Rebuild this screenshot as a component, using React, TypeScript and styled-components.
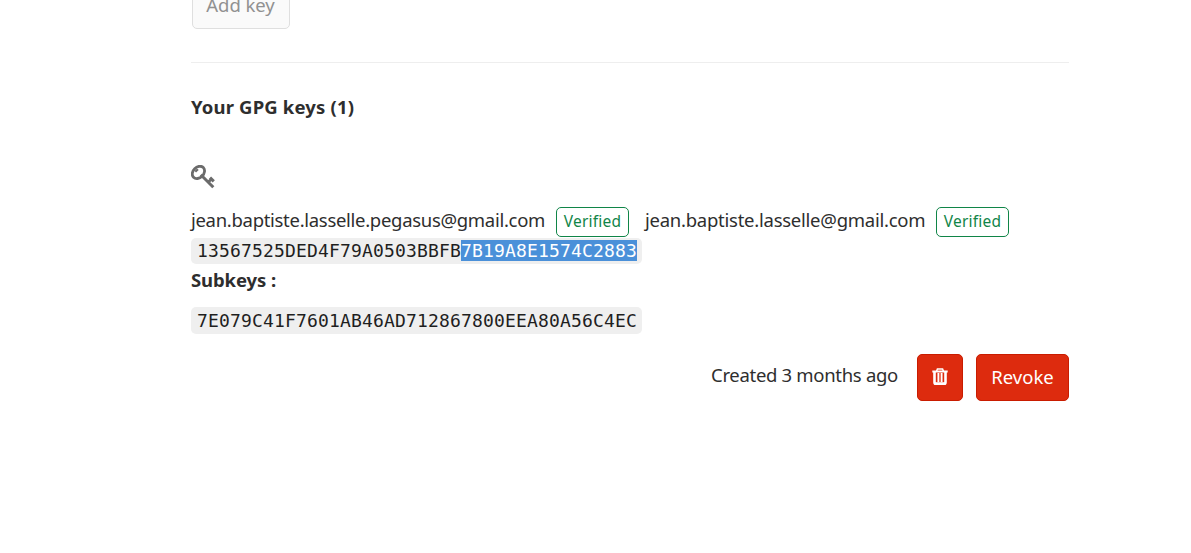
import React from "react";
import styled, { createGlobalStyle } from "styled-components";

const GlobalStyle = createGlobalStyle`
  * { box-sizing: border-box; }
  body {
    margin: 0;
    background: #fff;
    color: #2e2e2e;
    font-family: "Noto Sans", "Open Sans", sans-serif;
    font-size: 18.5px;
    line-height: 26px;
    overflow: hidden;
  }
`;

const Page = styled.main`
  width: 878px;
  height: 553px;
  margin-left: 191px;
  display: flex;
  flex-direction: column;
  align-items: flex-start;
`;

const Text = styled.span<{ $spacing?: number }>`
  white-space: nowrap;
  letter-spacing: ${(p) => p.$spacing ?? 0}px;
`;

const AddButton = styled.button`
  width: 98px;
  height: 47px;
  flex: none;
  margin: -18px 0 0 1px;
  padding: 0 1px 2px 0;
  border: 1px solid #dfdfdf;
  border-radius: 5px;
  background: #fafafa;
  color: #919191;
  font: inherit;
`;

const Divider = styled.hr`
  width: 100%;
  height: 1px;
  margin: 33px 0 0;
  border: 0;
  background: #eee;
`;

const Heading = styled.h5`
  margin: 31px 0 0;
  font-size: 18.5px;
  font-weight: 700;
  line-height: 26px;
`;

const KeyIcon = styled.svg`
  display: block;
  width: 24px;
  height: 24px;
  margin-top: 45px;
`;

const Emails = styled.div`
  display: flex;
  height: 30px;
  margin-top: 18px;
`;

const Email = styled.div<{ $width: number }>`
  display: flex;
  width: ${(p) => p.$width}px;
  justify-content: space-between;
  margin-right: 16px;
`;

const Badge = styled.span`
  display: flex;
  align-items: center;
  justify-content: center;
  width: 73px;
  height: 30px;
  padding-bottom: 2px;
  border: 1px solid #108548;
  border-radius: 5px;
  color: #108548;
  font-size: 15.5px;
`;

const Fingerprint = styled.code<{ $sub?: boolean }>`
  display: block;
  width: 451px;
  height: ${(p) => (p.$sub ? 27 : 26)}px;
  margin-top: ${(p) => (p.$sub ? 14 : 1)}px;
  padding: ${(p) => (p.$sub ? 3 : 2)}px 0 0 6px;
  border-radius: 5px;
  background: #efefef;
  color: #1f1f1f;
  font-family: "DejaVu Sans Mono", monospace;
  font-size: 18px;
  line-height: 21px;
  letter-spacing: 0.163px;
  white-space: nowrap;
`;

const Selected = styled.mark`
  display: inline-block;
  height: 21px;
  background: #4a90d9;
  color: #fff;
`;

const Subkeys = styled.div`
  margin-top: 3px;
  font-weight: 700;
`;

const Actions = styled.div`
  display: flex;
  align-self: flex-end;
  align-items: flex-start;
  margin-top: 20px;
`;

const Created = styled.span`
  width: 187px;
  margin: 8px 19px 0 0;
`;

const DangerButton = styled.button<{ $width: number }>`
  display: flex;
  align-items: center;
  justify-content: center;
  width: ${(p) => p.$width}px;
  height: 47px;
  padding: 0 0 2px;
  border: 1px solid #c91c00;
  border-radius: 5px;
  background: #dd2b0e;
  color: #fff;
  font: inherit;
  & + & { margin-left: 13px; }
`;

export default function App() {
  return (
    <>
      <GlobalStyle />
      <Page>
        <AddButton><Text $spacing={-0.05}>Add key</Text></AddButton>
        <Divider />
        <Heading><Text $spacing={0.16}>Your GPG keys (1)</Text></Heading>
        <KeyIcon viewBox="0 0 24 24" fill="none" stroke="#6b6b6b" aria-label="Key">
          <ellipse cx="7.4" cy="7.4" rx="6.9" ry="5.3" transform="rotate(-45 7.4 7.4)" strokeWidth="2.8" />
          <path d="M4.3 6.8l2.6-2.6" strokeWidth="2.2" />
          <path d="M9.8 9.8L22.3 22.3M17.2 17.2l2.2-2.2M19 12.6l3.8 3.8" strokeWidth="3" />
        </KeyIcon>
        <Emails>
          <Email $width={438}>
            <Text $spacing={-0.3}>jean.baptiste.lasselle.pegasus@gmail.com</Text>
            <Badge><Text $spacing={0.2}>Verified</Text></Badge>
          </Email>
          <Email $width={364}>
            <Text $spacing={-0.25}>jean.baptiste.lasselle@gmail.com</Text>
            <Badge><Text $spacing={0.2}>Verified</Text></Badge>
          </Email>
        </Emails>
        <Fingerprint>13567525DED4F79A0503BBFB<Selected>7B19A8E1574C2883</Selected></Fingerprint>
        <Subkeys><Text $spacing={-0.1}>Subkeys :</Text></Subkeys>
        <Fingerprint $sub>7E079C41F7601AB46AD712867800EEA80A56C4EC</Fingerprint>
        <Actions>
          <Created><Text $spacing={-0.31}>Created 3 months ago</Text></Created>
          <DangerButton $width={46} aria-label="Remove">
            <svg width="16" height="17" viewBox="0 0 16 17" fill="none" stroke="#fff">
              <path d="M4.5 3.5L5.4 1h5.2l.9 2.5" strokeWidth="1.5" />
              <path d="M.3 3.5h15.4" strokeWidth="2" />
              <path d="M2.5 4v10.6q0 1.4 1.4 1.4h8.2q1.4 0 1.4-1.4V4" strokeWidth="2.6" />
              <path d="M6.4 5v9M9.6 5v9" strokeWidth="1.9" />
              <path d="M3 15h10" strokeWidth="1.5" />
            </svg>
          </DangerButton>
          <DangerButton $width={93}><Text>Revoke</Text></DangerButton>
        </Actions>
      </Page>
    </>
  );
}
